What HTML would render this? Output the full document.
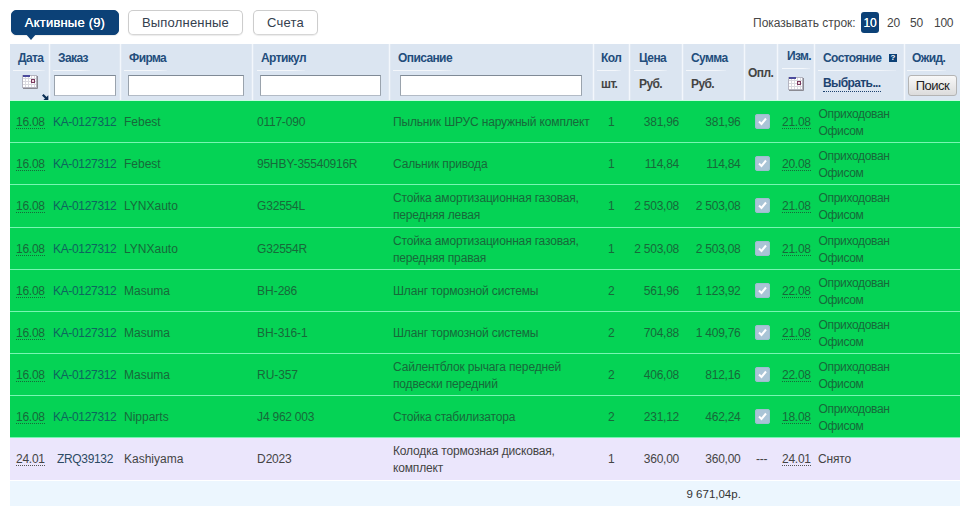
<!DOCTYPE html>
<html><head><meta charset="utf-8"><title>Заказы</title>
<style>
html,body{margin:0;padding:0;background:#fff;}
body{width:960px;height:506px;position:relative;overflow:hidden;font-family:"Liberation Sans",Arial,sans-serif;font-size:12px;color:#333;}
.a{position:absolute;white-space:nowrap;line-height:14px;}
.tab{letter-spacing:0.2px;position:absolute;top:10px;height:25px;line-height:23px;border:1px solid #cdcdcd;border-bottom-color:#d6d6d6;border-radius:5px;box-sizing:border-box;font-size:13px;color:#34404e;text-align:center;background:#fff;box-shadow:0 1px 1px rgba(0,0,0,.08);}
.tab.act{background:#0c4177;border-color:#0c4177;color:#fff;font-weight:normal;text-shadow:0 0 0 #fff;}
.hd{position:absolute;left:10px;top:44px;width:950px;height:57px;background:#dbe5f1;}
.sep{position:absolute;top:44px;width:1px;height:56px;background:#f3f7fc;box-shadow:-1px 0 0 rgba(243,247,252,.25),1px 0 0 rgba(243,247,252,.25);}
.ht{position:absolute;letter-spacing:-0.6px;font-weight:bold;color:#1d4370;line-height:14px;white-space:nowrap;}
.ul{position:absolute;height:1px;background:linear-gradient(90deg,#f4f7fb,#f4f7fb 75%,#e2eaf4);top:70px;}
.inp{position:absolute;top:75px;height:21px;box-sizing:border-box;border:1px solid #9aa3ad;border-top-color:#7f8a96;border-bottom-color:#b3bbc6;background:#fff;}
.row{position:absolute;left:10px;width:950px;height:41px;background:#05d355;}
.g{color:#1f6b3f;}
.d{border-bottom:1px dotted #1f5a3a;}
.rs{position:absolute;left:10px;width:950px;height:1px;background:#78f5b2;}
.dd{display:inline-block;height:13px;line-height:14px;}
.r{text-align:right;}
.n{letter-spacing:-0.25px;}
.c{letter-spacing:-0.16px;}
.cb{position:absolute;width:15px;height:15px;border-radius:3px;background:#a9c4d6;box-shadow:inset 0 0 0 1px #9fbdd0;}
</style></head><body>

<div class="tab act" style="left:11px;width:108px;font-weight:normal">Активные (9)</div>
<div style="position:absolute;left:25px;top:33px;width:0;height:0;border-left:6px solid transparent;border-right:6px solid transparent;border-top:7px solid #0c4177"></div>
<div class="tab" style="left:128px;width:115px">Выполненные</div>
<div class="tab" style="left:253px;width:65px">Счета</div>
<div class="a" style="left:753px;top:16px;color:#484848">Показывать строк:</div>
<div class="a" style="left:861px;top:12px;width:18px;height:21px;line-height:22px;background:#0c4177;color:#fff;text-align:center;border-radius:3px;text-shadow:0 0 0.5px #fff"><span class="n">10</span></div>
<div class="a" style="left:887px;top:16px;color:#444"><span class="n">20</span></div>
<div class="a" style="left:910px;top:16px;color:#444"><span class="n">50</span></div>
<div class="a" style="left:934px;top:16px;color:#444"><span class="n">100</span></div>
<div class="hd"></div>
<div class="sep" style="left:49px"></div>
<div class="sep" style="left:120px"></div>
<div class="sep" style="left:252px"></div>
<div class="sep" style="left:389px"></div>
<div class="sep" style="left:592.5px"></div>
<div class="sep" style="left:629px"></div>
<div class="sep" style="left:682px"></div>
<div class="sep" style="left:744px"></div>
<div class="sep" style="left:777px"></div>
<div class="sep" style="left:814px"></div>
<div class="sep" style="left:903.5px"></div>
<div class="ht" style="left:18px;top:51px;font-weight:bold;color:#234d7c">Дата</div>
<div class="ht" style="left:58px;top:51px;font-weight:bold;color:#234d7c">Заказ</div>
<div class="ht" style="left:129px;top:51px;font-weight:bold;color:#234d7c">Фирма</div>
<div class="ht" style="left:261px;top:51px;font-weight:bold;color:#234d7c">Артикул</div>
<div class="ht" style="left:398px;top:51px;font-weight:bold;color:#234d7c">Описание</div>
<div class="ht" style="left:601px;top:51px;font-weight:bold;color:#234d7c">Кол</div>
<div class="ht" style="left:639px;top:51px;font-weight:bold;color:#234d7c">Цена</div>
<div class="ht" style="left:691px;top:51px;font-weight:bold;color:#234d7c">Сумма</div>
<div class="ht" style="left:748px;top:66px;font-weight:bold;color:#444">Опл.</div>
<div class="ht" style="left:787px;top:49px;font-weight:bold;color:#234d7c">Изм.</div>
<div class="ht" style="left:823px;top:51px;font-weight:bold;color:#234d7c">Состояние</div>
<div class="ht" style="left:912px;top:51px;font-weight:bold;color:#234d7c">Ожид.</div>
<div class="ht" style="left:601px;top:77px;color:#444">шт.</div>
<div class="ht" style="left:639px;top:77px;color:#444">Руб.</div>
<div class="ht" style="left:691px;top:77px;color:#444">Руб.</div>
<div class="ht" style="left:823px;top:76px;border-bottom:1px dotted #1d4370;line-height:15px">Выбрать...</div>
<div class="ul" style="left:13px;width:32px;top:70px"></div>
<div class="ul" style="left:53px;width:37px;top:70px"></div>
<div class="ul" style="left:124px;width:43px;top:70px"></div>
<div class="ul" style="left:257px;width:48px;top:70px"></div>
<div class="ul" style="left:393px;width:59px;top:70px"></div>
<div class="ul" style="left:597px;width:24px;top:70px"></div>
<div class="ul" style="left:634px;width:33px;top:70px"></div>
<div class="ul" style="left:686px;width:40px;top:70px"></div>
<div class="ul" style="left:782px;width:28px;top:68px"></div>
<div class="ul" style="left:818px;width:78px;top:70px"></div>
<div class="ul" style="left:907px;width:39px;top:70px"></div>
<div class="inp" style="left:54px;width:62px"></div>
<div class="inp" style="left:128px;width:116px"></div>
<div class="inp" style="left:260px;width:121px"></div>
<div class="inp" style="left:400px;width:182px"></div>
<svg style="position:absolute;left:22px;top:75px" width="16" height="14" viewBox="0 0 16 14"><rect x="0.5" y="0.5" width="14" height="12" fill="#fff" stroke="#b4b4c0"/><path d="M1 3.5H14M1 6.5H14M1 9.5H14M3.5 1V12M6.5 1V12M9.5 1V12M12.5 1V12" stroke="#d9d9df" stroke-width="1" fill="none"/><rect x="1" y="0" width="7" height="2" fill="#4b4b9c"/><rect x="9.5" y="4.5" width="3" height="3" fill="#f0d8e0" stroke="#7a3a5e"/><path d="M1 13.5H15.5V1" stroke="#8a8a92" fill="none"/></svg>
<svg style="position:absolute;left:788px;top:77px" width="16" height="14" viewBox="0 0 16 14"><rect x="0.5" y="0.5" width="14" height="12" fill="#fff" stroke="#b4b4c0"/><path d="M1 3.5H14M1 6.5H14M1 9.5H14M3.5 1V12M6.5 1V12M9.5 1V12M12.5 1V12" stroke="#d9d9df" stroke-width="1" fill="none"/><rect x="1" y="0" width="7" height="2" fill="#4b4b9c"/><rect x="9.5" y="4.5" width="3" height="3" fill="#f0d8e0" stroke="#7a3a5e"/><path d="M1 13.5H15.5V1" stroke="#8a8a92" fill="none"/></svg>
<svg style="position:absolute;left:42px;top:94px" width="7" height="7" viewBox="0 0 7 7"><path d="M0.8 0.8L5 5" stroke="#0b2f55" stroke-width="2.2" fill="none"/><path d="M6.3 1.2V6.3H1.2Z" fill="#0b2f55"/></svg>
<div style="position:absolute;left:889px;top:54px;width:8px;height:8px;background:#0c4177;color:#fff;font-size:8px;font-weight:bold;line-height:8px;text-align:center">?</div>
<div style="position:absolute;left:908px;top:75px;width:49px;height:21px;box-sizing:border-box;border:1px solid #b4b4b4;border-radius:3px;background:linear-gradient(#f8f8f8,#dcdcdc);font-size:13px;letter-spacing:-0.5px;line-height:19px;text-align:center;color:#222">Поиск</div>
<div class="row" style="top:100px;height:1px;background:#c6fbe0"></div>
<div class="row" style="top:101px;height:336px"></div>
<div class="rs" style="top:142px"></div>
<div class="a" style="left:16px;top:115px;color:#17693a"><span class="dd" style="border-bottom:1px dotted #17693a"><span class="n">16.08</span></span></div>
<div class="a" style="left:53px;top:115px;letter-spacing:-0.33px;color:#0e665e">KA-0127312</div>
<div class="a" style="left:124px;top:115px;color:#17693a">Febest</div>
<div class="a" style="left:257px;top:115px;color:#17693a"><span class="n">0117</span>-<span class="n">090</span></div>
<div class="a c" style="left:393px;top:115px;color:#17693a">Пыльник ШРУС наружный комплект</div>
<div class="a" style="left:608px;top:115px;color:#17693a">1</div>
<div class="a r" style="left:629px;width:50px;top:115px;color:#17693a"><span class="n">381,96</span></div>
<div class="a r" style="left:682px;width:58.5px;top:115px;color:#17693a"><span class="n">381,96</span></div>
<div class="a" style="left:782px;top:115px;color:#17693a"><span class="dd" style="border-bottom:1px dotted #17693a"><span class="n">21.08</span></span></div>
<div class="cb" style="left:755px;top:114px"><svg width="15" height="15" viewBox="-0.5 -0.5 15 15" style="position:absolute;left:0;top:0"><path d="M3.5 7L6 9.5L10.5 4" stroke="#fff" stroke-width="2" fill="none"/></svg></div>
<div class="a" style="left:818.5px;letter-spacing:-0.32px;top:106px;line-height:17px;color:#17693a">Оприходован<br>Офисом</div>
<div class="rs" style="top:184px"></div>
<div class="a" style="left:16px;top:157px;color:#17693a"><span class="dd" style="border-bottom:1px dotted #17693a"><span class="n">16.08</span></span></div>
<div class="a" style="left:53px;top:157px;letter-spacing:-0.33px;color:#0e665e">KA-0127312</div>
<div class="a" style="left:124px;top:157px;color:#17693a">Febest</div>
<div class="a" style="left:257px;top:157px;color:#17693a"><span class="n">95</span>HBY-<span class="n">35540916</span>R</div>
<div class="a c" style="left:393px;top:157px;color:#17693a">Сальник привода</div>
<div class="a" style="left:608px;top:157px;color:#17693a">1</div>
<div class="a r" style="left:629px;width:50px;top:157px;color:#17693a"><span class="n">114,84</span></div>
<div class="a r" style="left:682px;width:58.5px;top:157px;color:#17693a"><span class="n">114,84</span></div>
<div class="a" style="left:782px;top:157px;color:#17693a"><span class="dd" style="border-bottom:1px dotted #17693a"><span class="n">20.08</span></span></div>
<div class="cb" style="left:755px;top:156px"><svg width="15" height="15" viewBox="-0.5 -0.5 15 15" style="position:absolute;left:0;top:0"><path d="M3.5 7L6 9.5L10.5 4" stroke="#fff" stroke-width="2" fill="none"/></svg></div>
<div class="a" style="left:818.5px;letter-spacing:-0.32px;top:148px;line-height:17px;color:#17693a">Оприходован<br>Офисом</div>
<div class="rs" style="top:227px"></div>
<div class="a" style="left:16px;top:199px;color:#17693a"><span class="dd" style="border-bottom:1px dotted #17693a"><span class="n">16.08</span></span></div>
<div class="a" style="left:53px;top:199px;letter-spacing:-0.33px;color:#0e665e">KA-0127312</div>
<div class="a" style="left:124px;top:199px;color:#17693a">LYNXauto</div>
<div class="a" style="left:257px;top:199px;color:#17693a">G<span class="n">32554</span>L</div>
<div class="a c" style="left:393px;top:190px;line-height:17px;color:#17693a">Стойка амортизационная газовая,<br>передняя левая</div>
<div class="a" style="left:608px;top:199px;color:#17693a">1</div>
<div class="a r" style="left:629px;width:50px;top:199px;color:#17693a"><span class="n">2 503,08</span></div>
<div class="a r" style="left:682px;width:58.5px;top:199px;color:#17693a"><span class="n">2 503,08</span></div>
<div class="a" style="left:782px;top:199px;color:#17693a"><span class="dd" style="border-bottom:1px dotted #17693a"><span class="n">21.08</span></span></div>
<div class="cb" style="left:755px;top:198px"><svg width="15" height="15" viewBox="-0.5 -0.5 15 15" style="position:absolute;left:0;top:0"><path d="M3.5 7L6 9.5L10.5 4" stroke="#fff" stroke-width="2" fill="none"/></svg></div>
<div class="a" style="left:818.5px;letter-spacing:-0.32px;top:190px;line-height:17px;color:#17693a">Оприходован<br>Офисом</div>
<div class="rs" style="top:269px"></div>
<div class="a" style="left:16px;top:242px;color:#17693a"><span class="dd" style="border-bottom:1px dotted #17693a"><span class="n">16.08</span></span></div>
<div class="a" style="left:53px;top:242px;letter-spacing:-0.33px;color:#0e665e">KA-0127312</div>
<div class="a" style="left:124px;top:242px;color:#17693a">LYNXauto</div>
<div class="a" style="left:257px;top:242px;color:#17693a">G<span class="n">32554</span>R</div>
<div class="a c" style="left:393px;top:233px;line-height:17px;color:#17693a">Стойка амортизационная газовая,<br>передняя правая</div>
<div class="a" style="left:608px;top:242px;color:#17693a">1</div>
<div class="a r" style="left:629px;width:50px;top:242px;color:#17693a"><span class="n">2 503,08</span></div>
<div class="a r" style="left:682px;width:58.5px;top:242px;color:#17693a"><span class="n">2 503,08</span></div>
<div class="a" style="left:782px;top:242px;color:#17693a"><span class="dd" style="border-bottom:1px dotted #17693a"><span class="n">21.08</span></span></div>
<div class="cb" style="left:755px;top:241px"><svg width="15" height="15" viewBox="-0.5 -0.5 15 15" style="position:absolute;left:0;top:0"><path d="M3.5 7L6 9.5L10.5 4" stroke="#fff" stroke-width="2" fill="none"/></svg></div>
<div class="a" style="left:818.5px;letter-spacing:-0.32px;top:233px;line-height:17px;color:#17693a">Оприходован<br>Офисом</div>
<div class="rs" style="top:311px"></div>
<div class="a" style="left:16px;top:284px;color:#17693a"><span class="dd" style="border-bottom:1px dotted #17693a"><span class="n">16.08</span></span></div>
<div class="a" style="left:53px;top:284px;letter-spacing:-0.33px;color:#0e665e">KA-0127312</div>
<div class="a" style="left:124px;top:284px;color:#17693a">Masuma</div>
<div class="a" style="left:257px;top:284px;color:#17693a">BH-<span class="n">286</span></div>
<div class="a c" style="left:393px;top:284px;color:#17693a">Шланг тормозной системы</div>
<div class="a" style="left:608px;top:284px;color:#17693a">2</div>
<div class="a r" style="left:629px;width:50px;top:284px;color:#17693a"><span class="n">561,96</span></div>
<div class="a r" style="left:682px;width:58.5px;top:284px;color:#17693a"><span class="n">1 123,92</span></div>
<div class="a" style="left:782px;top:284px;color:#17693a"><span class="dd" style="border-bottom:1px dotted #17693a"><span class="n">22.08</span></span></div>
<div class="cb" style="left:755px;top:283px"><svg width="15" height="15" viewBox="-0.5 -0.5 15 15" style="position:absolute;left:0;top:0"><path d="M3.5 7L6 9.5L10.5 4" stroke="#fff" stroke-width="2" fill="none"/></svg></div>
<div class="a" style="left:818.5px;letter-spacing:-0.32px;top:275px;line-height:17px;color:#17693a">Оприходован<br>Офисом</div>
<div class="rs" style="top:353px"></div>
<div class="a" style="left:16px;top:326px;color:#17693a"><span class="dd" style="border-bottom:1px dotted #17693a"><span class="n">16.08</span></span></div>
<div class="a" style="left:53px;top:326px;letter-spacing:-0.33px;color:#0e665e">KA-0127312</div>
<div class="a" style="left:124px;top:326px;color:#17693a">Masuma</div>
<div class="a" style="left:257px;top:326px;color:#17693a">BH-<span class="n">316</span>-<span class="n">1</span></div>
<div class="a c" style="left:393px;top:326px;color:#17693a">Шланг тормозной системы</div>
<div class="a" style="left:608px;top:326px;color:#17693a">2</div>
<div class="a r" style="left:629px;width:50px;top:326px;color:#17693a"><span class="n">704,88</span></div>
<div class="a r" style="left:682px;width:58.5px;top:326px;color:#17693a"><span class="n">1 409,76</span></div>
<div class="a" style="left:782px;top:326px;color:#17693a"><span class="dd" style="border-bottom:1px dotted #17693a"><span class="n">21.08</span></span></div>
<div class="cb" style="left:755px;top:325px"><svg width="15" height="15" viewBox="-0.5 -0.5 15 15" style="position:absolute;left:0;top:0"><path d="M3.5 7L6 9.5L10.5 4" stroke="#fff" stroke-width="2" fill="none"/></svg></div>
<div class="a" style="left:818.5px;letter-spacing:-0.32px;top:317px;line-height:17px;color:#17693a">Оприходован<br>Офисом</div>
<div class="rs" style="top:395px"></div>
<div class="a" style="left:16px;top:368px;color:#17693a"><span class="dd" style="border-bottom:1px dotted #17693a"><span class="n">16.08</span></span></div>
<div class="a" style="left:53px;top:368px;letter-spacing:-0.33px;color:#0e665e">KA-0127312</div>
<div class="a" style="left:124px;top:368px;color:#17693a">Masuma</div>
<div class="a" style="left:257px;top:368px;color:#17693a">RU-<span class="n">357</span></div>
<div class="a c" style="left:393px;top:359px;line-height:17px;color:#17693a">Сайлентблок рычага передней<br>подвески передний</div>
<div class="a" style="left:608px;top:368px;color:#17693a">2</div>
<div class="a r" style="left:629px;width:50px;top:368px;color:#17693a"><span class="n">406,08</span></div>
<div class="a r" style="left:682px;width:58.5px;top:368px;color:#17693a"><span class="n">812,16</span></div>
<div class="a" style="left:782px;top:368px;color:#17693a"><span class="dd" style="border-bottom:1px dotted #17693a"><span class="n">22.08</span></span></div>
<div class="cb" style="left:755px;top:367px"><svg width="15" height="15" viewBox="-0.5 -0.5 15 15" style="position:absolute;left:0;top:0"><path d="M3.5 7L6 9.5L10.5 4" stroke="#fff" stroke-width="2" fill="none"/></svg></div>
<div class="a" style="left:818.5px;letter-spacing:-0.32px;top:359px;line-height:17px;color:#17693a">Оприходован<br>Офисом</div>
<div class="rs" style="top:437px"></div>
<div class="a" style="left:16px;top:410px;color:#17693a"><span class="dd" style="border-bottom:1px dotted #17693a"><span class="n">16.08</span></span></div>
<div class="a" style="left:53px;top:410px;letter-spacing:-0.33px;color:#0e665e">KA-0127312</div>
<div class="a" style="left:124px;top:410px;color:#17693a">Nipparts</div>
<div class="a" style="left:257px;top:410px;color:#17693a">J<span class="n">4 962 003</span></div>
<div class="a c" style="left:393px;top:410px;color:#17693a">Стойка стабилизатора</div>
<div class="a" style="left:608px;top:410px;color:#17693a">2</div>
<div class="a r" style="left:629px;width:50px;top:410px;color:#17693a"><span class="n">231,12</span></div>
<div class="a r" style="left:682px;width:58.5px;top:410px;color:#17693a"><span class="n">462,24</span></div>
<div class="a" style="left:782px;top:410px;color:#17693a"><span class="dd" style="border-bottom:1px dotted #17693a"><span class="n">18.08</span></span></div>
<div class="cb" style="left:755px;top:409px"><svg width="15" height="15" viewBox="-0.5 -0.5 15 15" style="position:absolute;left:0;top:0"><path d="M3.5 7L6 9.5L10.5 4" stroke="#fff" stroke-width="2" fill="none"/></svg></div>
<div class="a" style="left:818.5px;letter-spacing:-0.32px;top:401px;line-height:17px;color:#17693a">Оприходован<br>Офисом</div>
<div class="row" style="top:438px;height:42px;background:#ebe6fc"></div>
<div class="a" style="left:16px;top:452px;color:#444"><span class="dd" style="border-bottom:1px dotted #555"><span class="n">24.01</span></span></div>
<div class="a" style="left:57px;top:452px;letter-spacing:-0.33px;color:#2d4a63">ZRQ39132</div>
<div class="a" style="left:124px;top:452px;color:#444">Kashiyama</div>
<div class="a" style="left:257px;top:452px;color:#444">D<span class="n">2023</span></div>
<div class="a c" style="left:393px;top:443px;line-height:17px;color:#444">Колодка тормозная дисковая,<br>комплект</div>
<div class="a" style="left:608px;top:452px;color:#444">1</div>
<div class="a r" style="left:629px;width:50px;top:452px;color:#444"><span class="n">360,00</span></div>
<div class="a r" style="left:682px;width:58.5px;top:452px;color:#444"><span class="n">360,00</span></div>
<div class="a" style="left:782px;top:452px;color:#444"><span class="dd" style="border-bottom:1px dotted #555"><span class="n">24.01</span></span></div>
<div class="a" style="left:756px;top:452px;letter-spacing:-0.3px;color:#444">---</div>
<div class="a c" style="left:818px;top:452px;color:#444">Снято</div>
<div class="row" style="top:481px;height:25px;background:#ecf6fe"></div>
<div class="a" style="left:686.5px;top:487px;font-size:11.5px;color:#333">9 671,04р.</div>
</body></html>
